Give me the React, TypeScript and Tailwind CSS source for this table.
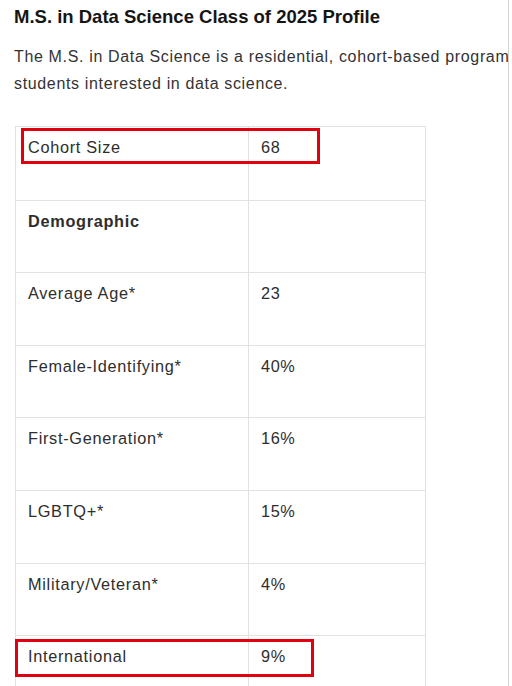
const rows: { label: string; value: string; bold?: boolean; mark?: "top" | "bottom" }[] = [
  { label: "Cohort Size", value: "68", mark: "top" },
  { label: "Demographic", value: "", bold: true },
  { label: "Average Age*", value: "23" },
  { label: "Female-Identifying*", value: "40%" },
  { label: "First-Generation*", value: "16%" },
  { label: "LGBTQ+*", value: "15%" },
  { label: "Military/Veteran*", value: "4%" },
  { label: "International", value: "9%", mark: "bottom" },
];

export default function App() {
  return (
    <div className="relative h-[686px] w-[512px] overflow-hidden bg-white font-['Liberation_Sans',Arial,sans-serif]">
      <div className="w-[509px] overflow-hidden border-r border-[#d4d4d4] h-full pl-[14px] pt-[5px]">
        <h2 className="whitespace-nowrap text-[18.5px] font-bold leading-[24px] text-[#151515]">
          M.S. in Data Science Class of 2025 Profile
        </h2>
        <p className="mt-[14px] w-[540px] whitespace-nowrap text-[16px] leading-[27px] tracking-[0.65px] text-[#333]">
          The M.S. in Data Science is a residential, cohort-based program
          <br />
          students interested in data science.
        </p>

        <div className="mt-[29px] ml-px w-[411px] border border-[#e2e2e2]">
          {rows.map((r, i) => (
            <div
              key={r.label}
              className={`relative flex h-[72.6px] ${i > 0 ? "border-t border-[#e2e2e2]" : ""}`}
            >
              <div
                className={`w-[233px] border-r border-[#e2e2e2] pl-[12px] pt-[8px] text-[16.3px] leading-[24px] tracking-[0.7px] text-[#2e2e2e] ${r.bold ? "font-bold tracking-[0.2px] text-[#1a1a1a]" : ""}`}
              >
                {r.label}
              </div>
              <div className="flex-1 pl-[12px] pt-[8px] text-[16.3px] leading-[24px] tracking-[0.6px] text-[#2e2e2e]">
                {r.value}
              </div>
              {r.mark === "top" && (
                <div className="absolute left-[5px] top-[1px] h-[36px] w-[299px] border-[3.5px] border-[#e0000f]" />
              )}
              {r.mark === "bottom" && (
                <div className="absolute left-[-1px] top-[3px] h-[38px] w-[299px] border-[3.5px] border-[#e0000f]" />
              )}
            </div>
          ))}
        </div>
      </div>
    </div>
  );
}
